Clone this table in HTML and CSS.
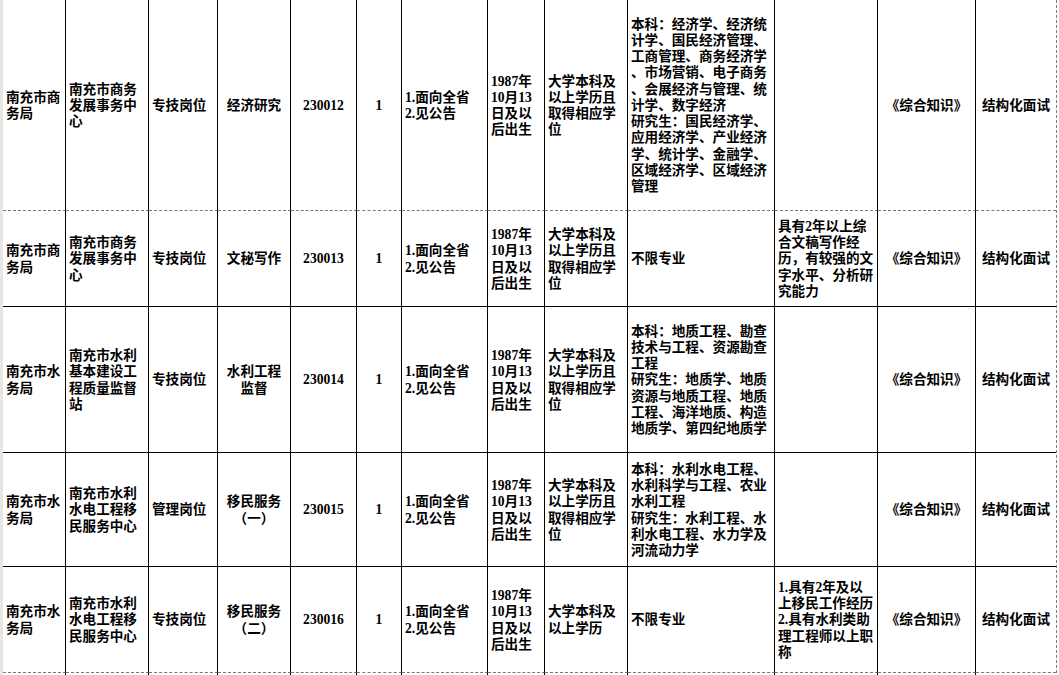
FILE: index.html
```html
<!DOCTYPE html>
<html lang="zh-CN">
<head>
<meta charset="utf-8">
<title>岗位表</title>
<link rel="stylesheet" href="styles.css">
</head>
<body>
<div class="sheet">
<table class="grid">
<colgroup>
<col class="c1"><col class="c2"><col class="c3"><col class="c4"><col class="c5"><col class="c6"><col class="c7"><col class="c8"><col class="c9"><col class="c10"><col class="c11"><col class="c12"><col class="c13">
</colgroup>
<tbody>
<tr class="r1 brk">
<td>南充市商<br>务局</td>
<td>南充市商务<br>发展事务中<br>心</td>
<td>专技岗位</td>
<td class="ctr">经济研究</td>
<td class="ctr">230012</td>
<td class="ctr">1</td>
<td>1.面向全省<br>2.见公告</td>
<td>1987年<br>10月13<br>日及以<br>后出生</td>
<td>大学本科及<br>以上学历且<br>取得相应学<br>位</td>
<td>本科：经济学、经济统<br>计学、国民经济管理、<br>工商管理、商务经济学<br>、市场营销、电子商务<br>、会展经济与管理、统<br>计学、数字经济<br>研究生：国民经济学、<br>应用经济学、产业经济<br>学、统计学、金融学、<br>区域经济学、区域经济<br>管理</td>
<td></td>
<td class="ctr">《综合知识》</td>
<td class="ctr">结构化面试</td>
</tr>
<tr class="r2">
<td>南充市商<br>务局</td>
<td>南充市商务<br>发展事务中<br>心</td>
<td>专技岗位</td>
<td class="ctr">文秘写作</td>
<td class="ctr">230013</td>
<td class="ctr">1</td>
<td>1.面向全省<br>2.见公告</td>
<td>1987年<br>10月13<br>日及以<br>后出生</td>
<td>大学本科及<br>以上学历且<br>取得相应学<br>位</td>
<td>不限专业</td>
<td>具有2年以上综<br>合文稿写作经<br>历，有较强的文<br>字水平、分析研<br>究能力</td>
<td class="ctr">《综合知识》</td>
<td class="ctr">结构化面试</td>
</tr>
<tr class="r3">
<td>南充市水<br>务局</td>
<td>南充市水利<br>基本建设工<br>程质量监督<br>站</td>
<td>专技岗位</td>
<td class="ctr">水利工程<br>监督</td>
<td class="ctr">230014</td>
<td class="ctr">1</td>
<td>1.面向全省<br>2.见公告</td>
<td>1987年<br>10月13<br>日及以<br>后出生</td>
<td>大学本科及<br>以上学历且<br>取得相应学<br>位</td>
<td>本科：地质工程、勘查<br>技术与工程、资源勘查<br>工程<br>研究生：地质学、地质<br>资源与地质工程、地质<br>工程、海洋地质、构造<br>地质学、第四纪地质学</td>
<td></td>
<td class="ctr">《综合知识》</td>
<td class="ctr">结构化面试</td>
</tr>
<tr class="r4">
<td>南充市水<br>务局</td>
<td>南充市水利<br>水电工程移<br>民服务中心</td>
<td>管理岗位</td>
<td class="ctr">移民服务<br>（一）</td>
<td class="ctr">230015</td>
<td class="ctr">1</td>
<td>1.面向全省<br>2.见公告</td>
<td>1987年<br>10月13<br>日及以<br>后出生</td>
<td>大学本科及<br>以上学历且<br>取得相应学<br>位</td>
<td>本科：水利水电工程、<br>水利科学与工程、农业<br>水利工程<br>研究生：水利工程、水<br>利水电工程、水力学及<br>河流动力学</td>
<td></td>
<td class="ctr">《综合知识》</td>
<td class="ctr">结构化面试</td>
</tr>
<tr class="r5 brk">
<td>南充市水<br>务局</td>
<td>南充市水利<br>水电工程移<br>民服务中心</td>
<td>专技岗位</td>
<td class="ctr">移民服务<br>（二）</td>
<td class="ctr">230016</td>
<td class="ctr">1</td>
<td>1.面向全省<br>2.见公告</td>
<td>1987年<br>10月13<br>日及以<br>后出生</td>
<td>大学本科及<br>以上学历</td>
<td>不限专业</td>
<td>1.具有2年及以<br>上移民工作经历<br>2.具有水利类助<br>理工程师以上职<br>称</td>
<td class="ctr">《综合知识》</td>
<td class="ctr">结构化面试</td>
</tr>
<tr class="r6">
<td></td><td></td><td></td><td></td><td></td><td></td><td></td><td></td><td></td><td></td><td></td><td></td><td></td>
</tr>
</tbody>
</table>
</div>
</body>
</html>
```

FILE: styles.css
```css
html, body {
  margin: 0;
  padding: 0;
  background: #ffffff;
  overflow: hidden;
}

.sheet {
  height: 675px;
  overflow: hidden;
  border-left: 3px solid #e6e6e6;
  box-sizing: border-box;
}

.grid {
  table-layout: fixed;
  width: 1054px;
  box-sizing: border-box;
  border-collapse: separate;
  border-spacing: 0;
  border-right: 1px dashed #7a7a7a;
  font-family: "Liberation Serif", "Noto Sans CJK SC", serif;
  font-weight: bold;
  font-size: 13.6px;
  line-height: 16.2px;
  color: #000000;
  text-spacing-trim: space-all;
}

.c1 { width: 63px; }
.c2 { width: 83px; }
.c3 { width: 69px; }
.c4 { width: 73px; }
.c5 { width: 66px; }
.c6 { width: 45px; }
.c7 { width: 86px; }
.c8 { width: 57px; }
.c9 { width: 83px; }
.c10 { width: 147px; }
.c11 { width: 103px; }
.c12 { width: 98px; }
.c13 { width: 80px; }

.grid td {
  box-sizing: border-box;
  padding: 2px 1px 0 3px;
  border-right: 1px solid #000000;
  border-bottom: 1px solid #000000;
  vertical-align: middle;
  text-align: left;
  white-space: nowrap;
  overflow: hidden;
}

.grid td:last-child {
  border-right: none;
}

.grid td.ctr {
  text-align: center;
  padding: 2px 1px 0 1px;
}

.grid tr.brk td {
  border-bottom: 1px dashed #7a7a7a;
}

.r1 { height: 211px; }
.r2 { height: 96px; }
.r3 { height: 146px; }
.r4 { height: 114px; }
.r5 { height: 106px; }
.r6 { height: 20px; }
```
